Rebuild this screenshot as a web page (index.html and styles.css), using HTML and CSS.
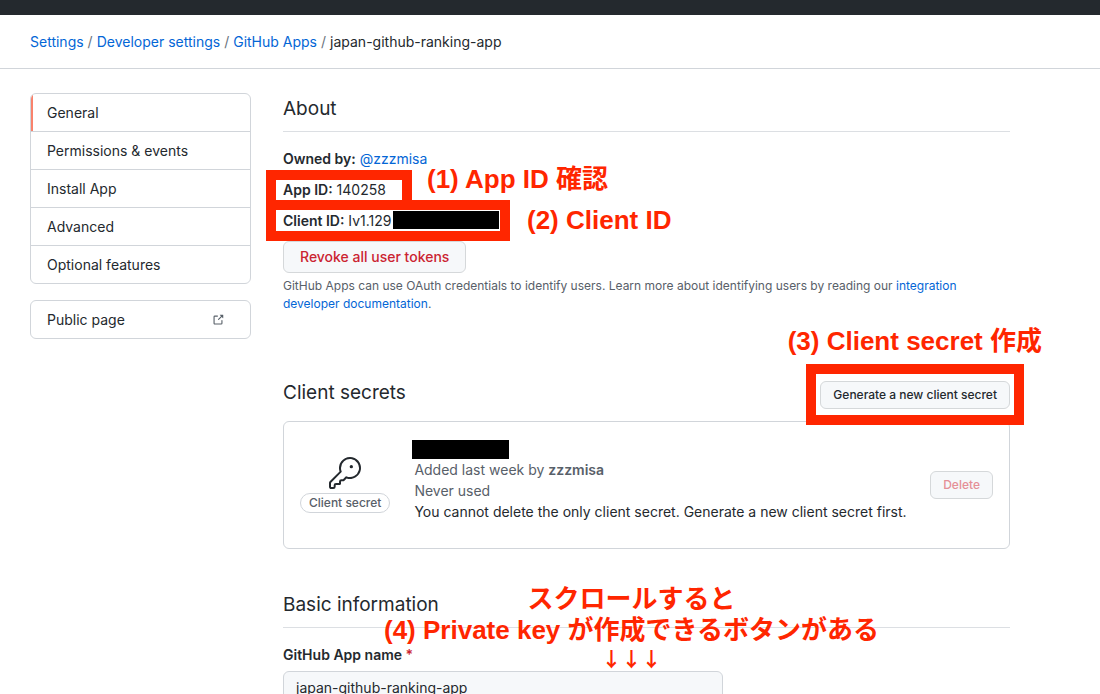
FILE: index.html
```html
<!DOCTYPE html>
<html lang="en">
<head>
<meta charset="utf-8">
<title>japan-github-ranking-app</title>
<meta name="viewport" content="width=device-width, initial-scale=1">
<link rel="stylesheet" href="styles.css">
</head>
<body>
<header class="topbar"></header>
<nav class="breadcrumb" aria-label="Breadcrumb">
  <a href="#">Settings</a><span class="slash">/</span><a href="#">Developer settings</a><span class="slash">/</span><a href="#">GitHub Apps</a><span class="slash">/</span><span>japan-github-ranking-app</span>
</nav>
<div class="layout">
  <aside class="sidebar">
    <nav class="menu">
      <a class="menu-item selected" href="#">General</a>
      <a class="menu-item" href="#">Permissions &amp; events</a>
      <a class="menu-item" href="#">Install App</a>
      <a class="menu-item" href="#">Advanced</a>
      <a class="menu-item" href="#">Optional features</a>
    </nav>
    <nav class="menu">
      <a class="menu-item" href="#">Public page
        <svg class="external" viewBox="0 0 16 16" width="12" height="12" aria-hidden="true"><path fill-rule="evenodd" d="M10.604 1h4.146a.25.25 0 01.25.25v4.146a.25.25 0 01-.427.177L13.03 4.03 9.28 7.78a.75.75 0 01-1.06-1.06l3.75-3.75-1.543-1.543A.25.25 0 0110.604 1zM3.75 2A1.75 1.75 0 002 3.75v8.5c0 .966.784 1.75 1.75 1.75h8.5A1.75 1.75 0 0014 12.25v-3.5a.75.75 0 00-1.5 0v3.5a.25.25 0 01-.25.25h-8.5a.25.25 0 01-.25-.25v-8.5a.25.25 0 01.25-.25h3.5a.75.75 0 000-1.5h-3.5z"/></svg>
      </a>
    </nav>
  </aside>
  <main class="content">
    <section class="about">
      <h2 class="heading ruled">About</h2>
      <p class="fact"><strong>Owned by:</strong> <a href="#">@zzzmisa</a></p>
      <p class="fact"><strong>App ID:</strong> 140258</p>
      <p class="fact"><strong>Client ID:</strong> Iv1.129</p>
      <button class="btn btn-danger" type="button">Revoke all user tokens</button>
      <p class="note">GitHub Apps can use OAuth credentials to identify users. Learn more about identifying users by reading our <a href="#">integration developer documentation</a>.</p>
      <span class="frame frame-app"></span>
      <span class="frame frame-client"></span>
      <span class="redacted redacted-id"></span>
      <span class="callout callout-app">(1) App ID <span class="ja" lang="ja">確認</span></span>
      <span class="callout callout-client">(2) Client ID</span>
    </section>
    <section class="secrets">
      <div class="secrets-head">
        <h2 class="heading">Client secrets</h2>
        <div class="generate">
          <button class="btn btn-sm" type="button">Generate a new client secret</button>
          <span class="frame frame-generate"></span>
          <span class="callout callout-generate">(3) Client secret <span class="ja" lang="ja">作成</span></span>
        </div>
      </div>
      <div class="secret-box">
        <div class="secret-kind">
          <svg class="key" viewBox="0 0 24 24" width="32" height="32" aria-hidden="true"><path d="M16.75 8.5a1.25 1.25 0 100-2.5 1.25 1.25 0 000 2.5z"/><path fill-rule="evenodd" d="M15.75 0a8.25 8.25 0 00-7.851 10.79L.513 18.178A1.75 1.75 0 000 19.414v2.836C0 23.217.784 24 1.75 24h1.5A1.75 1.75 0 005 22.25v-1a.25.25 0 01.25-.25h2.735a.75.75 0 00.545-.22l.214-.213A.875.875 0 009 19.948V18.5a.25.25 0 01.25-.25h1.086c.464 0 .91-.184 1.237-.513l1.636-1.636A8.25 8.25 0 1015.75 0zM9 8.25a6.75 6.75 0 114.288 6.287.75.75 0 00-.804.168l-1.971 1.972a.25.25 0 01-.177.073H9.25A1.75 1.75 0 007.5 18.5v1H5.25a1.75 1.75 0 00-1.75 1.75v1a.25.25 0 01-.25.25h-1.5a.25.25 0 01-.25-.25v-2.836a.25.25 0 01.073-.177l7.722-7.721a.75.75 0 00.168-.804A6.73 6.73 0 019 8.25z"/></svg>
          <span class="pill">Client secret</span>
        </div>
        <div class="secret-text">
          <span class="redacted redacted-secret"></span>
          <p class="secret-line muted">Added last week by <strong>zzzmisa</strong></p>
          <p class="secret-line muted">Never used</p>
          <p class="secret-line">You cannot delete the only client secret. Generate a new client secret first.</p>
        </div>
        <button class="btn btn-sm btn-danger" type="button" disabled>Delete</button>
      </div>
    </section>
    <section class="basic">
      <h2 class="heading ruled">Basic information</h2>
      <label class="label" for="app-name">GitHub App name <span class="required">*</span></label>
      <input class="field" id="app-name" type="text" value="japan-github-ranking-app">
      <div class="callout callout-scroll" lang="ja">
        <div class="ja">スクロールすると</div>
        <div>(4) Private key <span class="ja">が作成できるボタンがある</span></div>
        <div class="ja arrows">↓↓↓</div>
      </div>
    </section>
  </main>
</div>
</body>
</html>
```
FILE: styles.css
```css
* {
  box-sizing: border-box;
}

body {
  margin: 0;
  background: #fff;
  color: #24292e;
  font: 14px/21px Inter, "Noto Sans", sans-serif;
}

h2,
p {
  margin: 0;
}

a {
  color: #0366d6;
  text-decoration: none;
}

strong {
  font-weight: 600;
}

.topbar {
  height: 15px;
  background: #24292e;
}

.breadcrumb {
  display: flex;
  padding: 16px 30px;
  border-bottom: 1px solid #d1d5da;
}

.slash {
  padding: 0 4px;
  color: #6a737d;
}

.layout {
  display: grid;
  grid-template-columns: 221px minmax(0, 1fr);
  gap: 32px;
  max-width: 1040px;
  padding: 24px 30px;
}

.sidebar {
  display: flex;
  flex-direction: column;
  gap: 16px;
}

.menu {
  border: 1px solid #d1d5da;
  border-radius: 6px;
  overflow: hidden;
}

.menu-item {
  display: flex;
  align-items: center;
  justify-content: space-between;
  padding: 8px 26px 8px 16px;
  color: #24292e;
}

.menu-item + .menu-item {
  border-top: 1px solid #d1d5da;
}

.selected {
  box-shadow: inset 2px 0 0 #f9826c;
}

.external {
  fill: #586069;
}

.heading {
  font-size: 19px;
  font-weight: 400;
  line-height: 32px;
}

.ruled {
  padding-bottom: 6px;
  border-bottom: 1px solid #dcdfe3;
  margin-bottom: 16px;
}

.about,
.basic,
.generate {
  position: relative;
}

.fact {
  margin-bottom: 10px;
}

.btn {
  height: 32px;
  padding: 0 16px;
  border: 1px solid #d5d8da;
  border-radius: 6px;
  background: #f6f8fa;
  color: #24292e;
  font: 500 14px/20px Inter, "Noto Sans", sans-serif;
  white-space: nowrap;
}

.btn-sm {
  display: block;
  height: 28px;
  padding: 0 12px;
  font-size: 12px;
}

.btn-danger {
  color: #cb2431;
}

.btn-danger:disabled {
  color: #e58f96;
}

.note {
  margin-top: 4px;
  color: #586069;
  font-size: 12px;
  line-height: 18px;
}

.secrets {
  margin-top: 64px;
}

.secrets-head {
  display: flex;
  align-items: flex-end;
  justify-content: space-between;
  margin-bottom: 12px;
}

.secret-box {
  display: flex;
  align-items: center;
  min-height: 128px;
  padding: 16px;
  border: 1px solid #d1d5da;
  border-radius: 6px;
}

.secret-kind {
  display: flex;
  flex-direction: column;
  align-items: center;
  gap: 4px;
  margin-right: 22px;
}

.key {
  fill: #24292e;
}

.pill {
  padding: 0 8px;
  border: 1px solid #d1d5da;
  border-radius: 20px;
  color: #586069;
  font-size: 12px;
  font-weight: 500;
  line-height: 18px;
}

.secret-text {
  flex: 1;
  padding-bottom: 8px;
}

.secret-line {
  padding-left: 2px;
}

.muted {
  color: #586069;
}

.redacted {
  display: block;
  background: #000;
}

.redacted-secret {
  width: 97px;
  height: 19px;
}

.redacted-id {
  position: absolute;
  left: 110px;
  top: 118px;
  width: 106px;
  height: 18px;
}

.basic {
  margin-top: 40px;
}

.label {
  display: block;
  font-weight: 600;
}

.required {
  color: #cb2431;
}

.field {
  width: 440px;
  max-width: 100%;
  height: 32px;
  padding: 5px 12px;
  border: 1px solid #d1d5da;
  border-radius: 6px;
  margin-top: 6px;
  background: #f6f8fa;
  color: #24292e;
  font: inherit;
}

.frame {
  position: absolute;
  border: 10px solid #ff2600;
}

.frame-app {
  left: -17px;
  top: 77px;
  width: 146px;
  height: 40px;
}

.frame-client {
  left: -17px;
  top: 107px;
  width: 244px;
  height: 41px;
}

.frame-generate {
  inset: -17px -14px -16px -14px;
  pointer-events: none;
}

.callout {
  position: absolute;
  color: #ff2600;
  font: 700 26px/31px "Liberation Sans", "Noto Sans CJK JP", sans-serif;
  white-space: nowrap;
}

.ja {
  font-family: "Noto Sans CJK JP", sans-serif;
  font-weight: 700;
}

.callout-app {
  left: 144px;
  top: 68px;
}

.callout-client {
  left: 244px;
  top: 112px;
}

.callout-generate {
  right: -32px;
  top: -58px;
}

.callout-scroll {
  left: 101px;
  top: -8px;
  text-align: center;
  pointer-events: none;
}

.arrows {
  font-size: 20px;
  line-height: 26px;
}
```
